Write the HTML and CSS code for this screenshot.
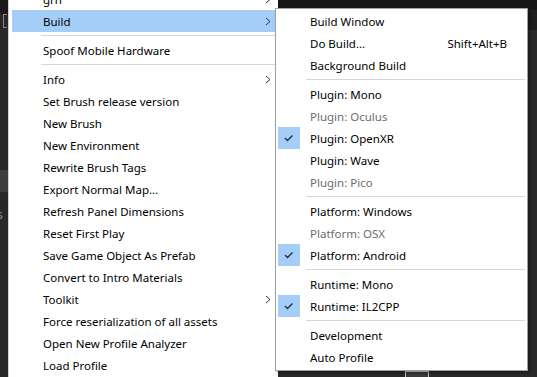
FILE: index.html
```html
<!DOCTYPE html>
<html lang="en">
<head>
    <meta charset="UTF-8">
    <meta name="viewport" content="width=device-width, initial-scale=1.0">
    <title>Build Menu</title>
    <link rel="stylesheet" href="styles.css">
</head>
<body>
    <div class="editor">
        <div class="side-strip">
            <div class="strip-top"></div>
            <div class="strip-icon"></div>
            <div class="strip-tab"></div>
            <div class="strip-label">s</div>
        </div>
        <div class="top-bar"></div>
        <div class="right-strip"></div>
        <div class="bottom-gizmo"></div>
    </div>

    <!-- main dropdown -->
    <div class="menu main-menu">
        <div class="item">grh<span class="chevron"><svg width="6" height="9" viewBox="0 0 6 9"><polyline points="1,1 5,4.5 1,8" /></svg></span></div>
        <div class="item active">Build<span class="chevron"><svg width="6" height="9" viewBox="0 0 6 9"><polyline points="1,1 5,4.5 1,8" /></svg></span></div>
        <div class="sep"></div>
        <div class="item">Spoof Mobile Hardware</div>
        <div class="sep"></div>
        <div class="item">Info<span class="chevron"><svg width="6" height="9" viewBox="0 0 6 9"><polyline points="1,1 5,4.5 1,8" /></svg></span></div>
        <div class="item">Set Brush release version</div>
        <div class="item">New Brush</div>
        <div class="item">New Environment</div>
        <div class="item">Rewrite Brush Tags</div>
        <div class="item">Export Normal Map...</div>
        <div class="item">Refresh Panel Dimensions</div>
        <div class="item">Reset First Play</div>
        <div class="item">Save Game Object As Prefab</div>
        <div class="item">Convert to Intro Materials</div>
        <div class="item">Toolkit<span class="chevron"><svg width="6" height="9" viewBox="0 0 6 9"><polyline points="1,1 5,4.5 1,8" /></svg></span></div>
        <div class="item">Force reserialization of all assets</div>
        <div class="item">Open New Profile Analyzer</div>
        <div class="item">Load Profile</div>
    </div>

    <!-- Build submenu -->
    <div class="menu sub-menu">
        <div class="item">Build Window</div>
        <div class="item">Do Build...<span class="shortcut">Shift+Alt+B</span></div>
        <div class="item">Background Build</div>
        <div class="sep"></div>
        <div class="item">Plugin: Mono</div>
        <div class="item disabled">Plugin: Oculus</div>
        <div class="item checked"><span class="check"><svg width="22" height="22" viewBox="0 0 22 22"><polyline points="7,11 9.5,13.5 14.5,8.5" /></svg></span>Plugin: OpenXR</div>
        <div class="item">Plugin: Wave</div>
        <div class="item disabled">Plugin: Pico</div>
        <div class="sep"></div>
        <div class="item">Platform: Windows</div>
        <div class="item disabled">Platform: OSX</div>
        <div class="item checked"><span class="check"><svg width="22" height="22" viewBox="0 0 22 22"><polyline points="7,11 9.5,13.5 14.5,8.5" /></svg></span>Platform: Android</div>
        <div class="sep"></div>
        <div class="item">Runtime: Mono</div>
        <div class="item checked"><span class="check"><svg width="22" height="22" viewBox="0 0 22 22"><polyline points="7,11 9.5,13.5 14.5,8.5" /></svg></span>Runtime: IL2CPP</div>
        <div class="sep"></div>
        <div class="item">Development</div>
        <div class="item">Auto Profile</div>
    </div>
</body>
</html>
```

FILE: styles.css
```css
body {
    margin: 0;
    width: 537px;
    height: 377px;
    overflow: hidden;
    position: relative;
    background: #2a2a2a;
    font-family: 'Segoe UI', 'Noto Sans', sans-serif;
    font-size: 11.5px;
}

.editor {
    width: 100%;
    height: 100%;
    position: relative;
}

.side-strip {
    width: 8px;
    height: 100%;
    background: #282828;
    display: flex;
    flex-direction: column;
}

.strip-top {
    height: 14px;
    background: #191919;
}

.strip-icon {
    height: 12px;
    margin: 0 1px 14px 3px;
    border: 1px solid #8a8a8a;
    border-right: none;
}

.strip-tab {
    height: 22px;
    margin-top: 128px;
    background: #3e3e3e;
}

.strip-label {
    color: #8a8a8a;
    font-size: 12px;
    margin-top: 14px;
    margin-left: -3px;
}

.top-bar {
    position: absolute;
    left: 276px;
    top: 0;
    right: 0;
    height: 10px;
    background: #171717;
}

.right-strip {
    position: absolute;
    right: 0;
    top: 10px;
    width: 9px;
    height: 20px;
    background: #1f1f1f;
}

.bottom-gizmo {
    position: absolute;
    left: 405px;
    bottom: 0;
    width: 22px;
    height: 5px;
    border: 1px solid #c8c8c8;
    border-bottom: none;
    background: #3a3a3a;
}

.menu {
    position: absolute;
    background: #ffffff;
    color: #000000;
}

.main-menu {
    left: 8px;
    top: -14px;
    width: 270px;
    padding: 2px 0 2px 3px;
    border-left: 1px solid #d0d0d0;
    box-sizing: border-box;
    height: 400px;
}

.sub-menu {
    left: 275px;
    top: 8px;
    width: 253px;
    padding: 1px 2px 2px 2px;
    border: 1px solid #a0a0a0;
    box-sizing: border-box;
    box-shadow: 2px 2px 3px rgba(0, 0, 0, 0.35);
}

.item {
    height: 21px;
    line-height: 22px;
    padding-top: 1px;
    padding-left: 32px;
    position: relative;
    white-space: nowrap;
}

.main-menu .item {
    padding-left: 31px;
}

.item.active {
    background: #a4cdf7;
}

.item.disabled {
    color: #6d6d6d;
}

.chevron {
    position: absolute;
    right: 7px;
    top: 7px;
    width: 6px;
    height: 9px;
    display: flex;
}

.chevron polyline {
    fill: none;
    stroke: #333333;
    stroke-width: 1;
}

.check {
    position: absolute;
    left: 0;
    top: 0;
    width: 22px;
    height: 22px;
    background: #a4cdf7;
    display: flex;
}

.check polyline {
    fill: none;
    stroke: #1f2f44;
    stroke-width: 1.4;
}

.shortcut {
    position: absolute;
    right: 18px;
    top: 1px;
}

.sep {
    height: 7px;
    display: flex;
    align-items: center;
    padding-left: 28px;
}

.main-menu .sep {
    padding-left: 29px;
}

.sep::after {
    content: "";
    flex: 1;
    height: 1px;
    background: #d7d7d7;
}
```
